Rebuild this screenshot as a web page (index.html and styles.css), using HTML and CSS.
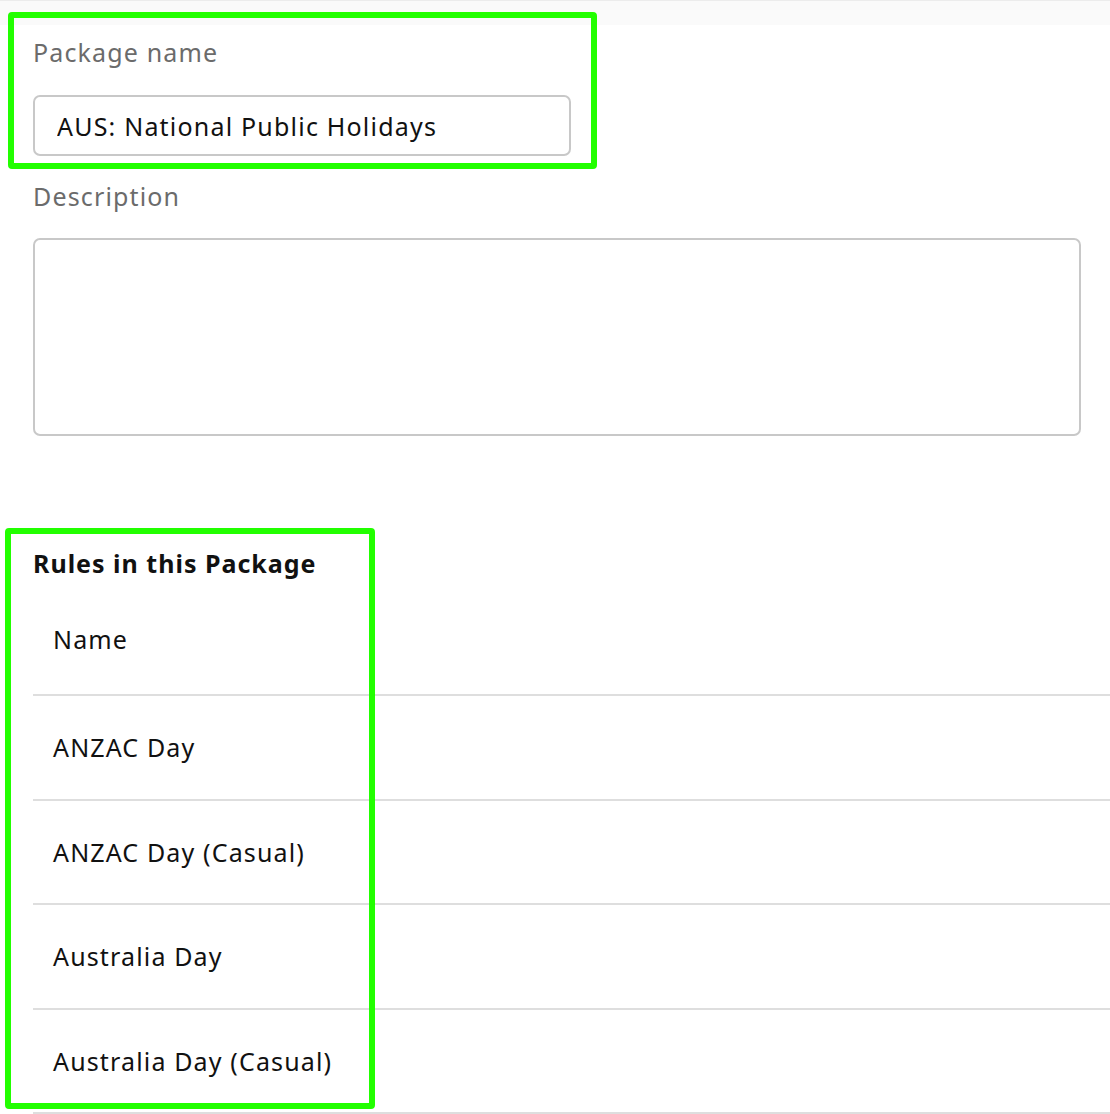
FILE: index.html
```html
<!DOCTYPE html>
<html lang="en">
<head>
  <meta charset="UTF-8">
  <meta name="viewport" content="width=device-width, initial-scale=1.0">
  <title>Package</title>
  <link rel="stylesheet" href="styles.css">
</head>
<body>
  <div class="topbar"></div>

  <div class="page">
    <div class="fields">
      <label class="f-label" for="pkg-name">Package name</label>
      <input class="f-input" type="text" id="pkg-name" value="AUS: National Public Holidays">

      <label class="f-label f-desc" for="pkg-desc">Description</label>
      <textarea class="f-area" id="pkg-desc"></textarea>
    </div>

    <h3 class="rules-head">Rules in this Package</h3>
    <table class="rules">
      <thead>
        <tr><th>Name</th></tr>
      </thead>
      <tbody>
        <tr><td>ANZAC Day</td></tr>
        <tr><td>ANZAC Day (Casual)</td></tr>
        <tr><td>Australia Day</td></tr>
        <tr><td>Australia Day (Casual)</td></tr>
      </tbody>
    </table>
  </div>

  <!-- highlight boxes drawn over the page -->
  <div class="mark mark-name"></div>
  <div class="mark mark-rules"></div>
</body>
</html>
```

FILE: styles.css
```css
body {
  font-family: 'Noto Sans', 'Open Sans', sans-serif;
  font-size: 25px;
  letter-spacing: 1.15px;
  margin: 0;
  padding: 0;
  background-color: #fff;
  color: #111;
  position: relative;
  overflow: hidden;
}

.topbar {
  height: 24px;
  background-color: #fafafa;
  border-top: 1px solid #ececec;
}

.page {
  padding: 0 0 0 33px;
}

.fields {
  padding-right: 29px;
}

.f-label {
  display: block;
  line-height: 32px;
  color: #6b6b6b;
  margin: 11px 0 27px;
}

.f-desc {
  margin: 24px 0 26px;
}

.f-input {
  display: block;
  box-sizing: border-box;
  width: 538px;
  height: 61px;
  padding: 0 22px;
  font-family: inherit;
  font-size: 25px;
  letter-spacing: 1.2px;
  color: #111;
  border: 2px solid #c8c8c8;
  border-radius: 7px;
  background-color: #fff;
  margin: 0;
}

.f-area {
  display: block;
  box-sizing: border-box;
  width: 100%;
  height: 198px;
  border: 2px solid #c8c8c8;
  border-radius: 7px;
  resize: none;
  margin: 0;
}

.rules-head {
  font-size: 25px;
  line-height: 32px;
  font-weight: bold;
  letter-spacing: 1px;
  margin: 111px 0 7px;
}

.rules {
  width: 100%;
  border-collapse: collapse;
}

.rules th,
.rules td {
  text-align: left;
  font-weight: normal;
  padding: 0 20px;
  border-bottom: 2px solid #dedede;
}

.rules th {
  height: 105px;
  vertical-align: middle;
  padding-bottom: 3px;
}

.rules td {
  height: 102.5px;
}

.mark {
  position: absolute;
  border: 6px solid #22ff00;
  border-radius: 4px;
  pointer-events: none;
}

.mark-name {
  left: 8px;
  top: 12px;
  width: 577px;
  height: 145px;
}

.mark-rules {
  left: 5px;
  top: 528px;
  width: 358px;
  height: 569px;
}
```
